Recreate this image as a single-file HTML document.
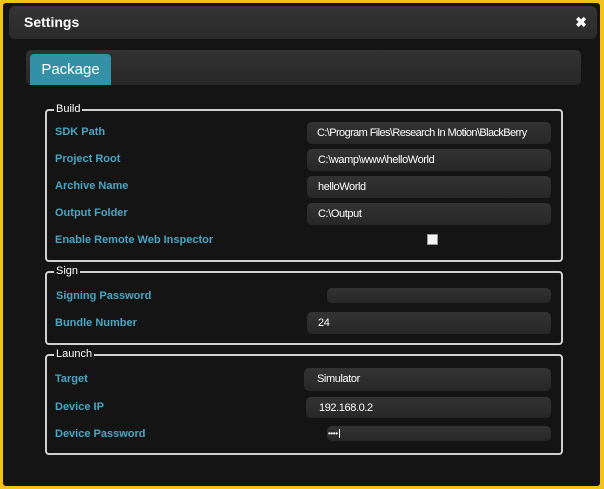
<!DOCTYPE html>
<html><head><style>
*{box-sizing:border-box;margin:0;padding:0}
body{width:604px;height:489px;background:#f2c21b;position:relative;overflow:hidden;font-family:"Liberation Sans",sans-serif}
.dlg{position:absolute;left:3px;top:3px;width:597px;height:483px;background:#141414;border-radius:3px}
.title{position:absolute;left:9px;top:6px;width:588px;height:33px;background:linear-gradient(#343434,#2a2a2a);border-radius:6px;color:#fff;font-weight:bold;font-size:14px;line-height:33px;padding-left:15px}
.x{position:absolute;right:10px;top:0;font-size:14px}
.tabs{position:absolute;left:26px;top:50px;width:555px;height:35px;background:linear-gradient(#323232,#282828);border-radius:5px}
.tab{position:absolute;left:4px;top:4px;width:81px;height:31px;background:#3490a6;border-radius:4px 4px 0 0;color:#fff;font-size:15px;line-height:31px;text-align:center}
.fs{position:absolute;left:45px;width:518px;border:2px solid #d0d0d0;border-radius:4px}
.lg{position:absolute;top:-9px;left:7px;background:#141414;color:#fff;font-size:11px;padding:0 2px;line-height:14px}
.l{position:absolute;left:55px;color:#4aa6c4;font-weight:bold;font-size:11px;line-height:14px}
.i{position:absolute;right:53px;height:22px;background:linear-gradient(#333,#272727);border-radius:5px;color:#fff;font-size:11px;line-height:22px;padding-left:11px;white-space:nowrap;overflow:hidden;letter-spacing:-0.4px}
.cb{position:absolute;left:427px;top:234px;width:11px;height:11px;background:#f4f4f4;border:1px solid #999}
</style></head><body>
<div class="dlg"></div>
<div class="title">Settings<span class="x">✖</span></div>
<div class="tabs"><div class="tab">Package</div></div>

<div class="fs" style="top:109px;height:153px"><span class="lg">Build</span></div>
<div class="l" style="top:125px">SDK Path</div>
<div class="i" style="left:307px;top:122px;padding-left:10px;letter-spacing:-0.6px">C:\Program Files\Research In Motion\BlackBerry</div>
<div class="l" style="top:152px">Project Root</div>
<div class="i" style="left:307px;top:149px">C:\wamp\www\helloWorld</div>
<div class="l" style="top:179px">Archive Name</div>
<div class="i" style="left:307px;top:176px">helloWorld</div>
<div class="l" style="top:206px">Output Folder</div>
<div class="i" style="left:307px;top:203px">C:\Output</div>
<div class="l" style="top:233px">Enable Remote Web Inspector</div>
<div class="cb"></div>

<div class="fs" style="top:271px;height:74px"><span class="lg">Sign</span></div>
<div class="l" style="top:289px;left:56px">Signing Password</div>
<div class="i" style="left:327px;top:288px;height:15px"></div>
<div class="l" style="top:316px">Bundle Number</div>
<div class="i" style="left:307px;top:312px">24</div>

<div class="fs" style="top:354px;height:101px"><span class="lg">Launch</span></div>
<div class="l" style="top:372px">Target</div>
<div class="i" style="left:304px;top:368px;height:23px;padding-left:13px">Simulator</div>
<div class="l" style="top:400px">Device IP</div>
<div class="i" style="left:306px;top:397px;height:21px;padding-left:13px">192.168.0.2</div>
<div class="l" style="top:427px">Device Password</div>
<div class="i" style="left:327px;top:426px;height:15px;line-height:15px;padding-left:1px;font-size:8px">••••<span style="border-left:1px solid #fff;margin-left:1px"></span></div>
</body></html>
